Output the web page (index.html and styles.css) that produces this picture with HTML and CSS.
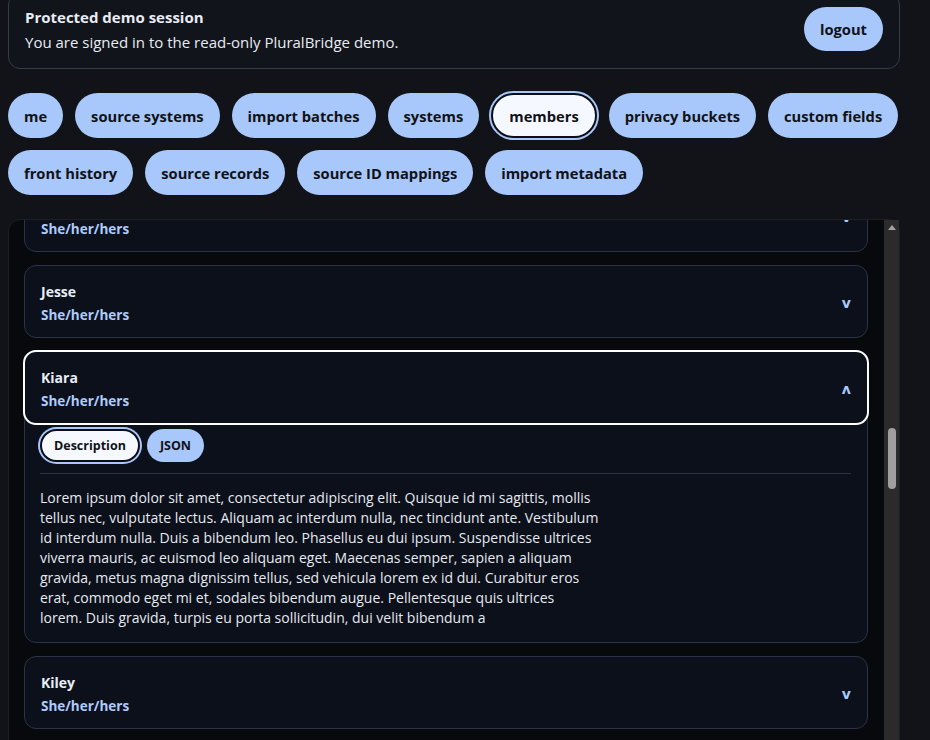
FILE: index.html
```html
<!DOCTYPE html>
<html lang="en">
<head>
  <meta charset="UTF-8">
  <title>PluralBridge demo</title>
  <link rel="stylesheet" href="styles.css">
</head>
<body>
  <header class="session">
    <div>
      <div class="session-title">Protected demo session</div>
      <div class="session-text">You are signed in to the read-only PluralBridge demo.</div>
    </div>
    <button class="pill">logout</button>
  </header>

  <nav class="tabs">
    <button class="pill">me</button>
    <button class="pill">source systems</button>
    <button class="pill">import batches</button>
    <button class="pill">systems</button>
    <button class="pill active">members</button>
    <button class="pill">privacy buckets</button>
    <button class="pill">custom fields</button>
    <button class="pill">front history</button>
    <button class="pill">source records</button>
    <button class="pill">source ID mappings</button>
    <button class="pill">import metadata</button>
  </nav>

  <section class="panel">
    <div class="list" id="members"></div>
    <div class="scrollbar">
      <div class="arrow up"></div>
      <div class="track"><div class="thumb" id="thumb"></div></div>
      <div class="arrow down"></div>
    </div>
  </section>

  <script src="app.js"></script>
</body>
</html>
```

FILE: styles.css
```css
html {
  overflow: hidden;
}

body {
  background: #111318;
  font-family: "Open Sans", "Noto Sans", sans-serif;
  color: #e8ecf4;
  margin: 0;
  padding: 0 30px 0 8px;
}

.session {
  margin-top: -7px;
  display: flex;
  justify-content: space-between;
  align-items: center;
  padding: 12px 16px 14px;
  border: 1px solid #363b46;
  border-radius: 12px;
  background: #11141a;
}

.session-title {
  font-size: 15px;
  font-weight: 700;
  line-height: 22px;
  margin-bottom: 2px;
}

.session-text {
  font-size: 15px;
  line-height: 24px;
}

.pill {
  font-family: inherit;
  font-size: 14.7px;
  font-weight: 700;
  color: #101217;
  background: #a8c7fa;
  border: none;
  border-radius: 999px;
  height: 45px;
  padding: 0 16px;
  cursor: pointer;
}

.pill.active {
  background: #f5f8ff;
  border: 2px solid #0b0d12;
  box-shadow: 0 0 0 2px #a8c7fa;
}

.session .pill {
  height: 44px;
  margin-bottom: 3px;
}

.tabs {
  display: flex;
  flex-wrap: wrap;
  gap: 12px;
  margin-top: 24px;
  margin-right: -8px;
}

.panel {
  display: flex;
  margin-top: 24px;
  height: 560px;
  background: #07090c;
  border: 1px solid #1c1f26;
  border-radius: 12px;
}

.list {
  position: relative;
  flex: 1;
  min-width: 0;
  overflow: hidden;
  padding: 16px 16px 0 15px;
  border-radius: 12px 0 0 12px;
}

.scrollbar {
  width: 15px;
  display: flex;
  flex-direction: column;
  background: #2b2b2b;
}

.arrow {
  height: 15px;
  display: flex;
  justify-content: center;
  align-items: center;
}

.arrow::before {
  content: "";
  border-left: 4.5px solid transparent;
  border-right: 4.5px solid transparent;
}

.arrow.up::before {
  border-bottom: 5px solid #a3a3a3;
}

.arrow.down::before {
  border-top: 5px solid #a3a3a3;
}

.track {
  flex: 1;
  display: flex;
  flex-direction: column;
  align-items: center;
}

.thumb {
  width: 8px;
  border-radius: 4px;
  background: #9f9f9f;
}

.card {
  border: 1px solid #2a3347;
  border-radius: 12px;
  background: #0b101b;
  margin-bottom: 13px;
}

.card-head {
  display: flex;
  justify-content: space-between;
  align-items: center;
  padding: 16px 16px 13px;
  border-radius: 11px;
}

.card.open .card-head {
  outline: 2px solid #ffffff;
  outline-offset: 0;
}

.name {
  font-size: 14px;
  font-weight: 700;
  line-height: 20px;
  margin-bottom: 4px;
  color: #e8edf6;
}

.pronouns {
  font-size: 13.5px;
  font-weight: 700;
  line-height: 18px;
  color: #aecbfb;
}

.chevron {
  font-family: "DejaVu Sans", sans-serif;
  font-size: 14px;
  font-weight: 700;
  color: #a8c7fa;
}

.card-body {
  padding: 0 16px 14px 15px;
}

.body-tabs {
  display: flex;
  gap: 7px;
  padding: 6px 0 11px;
  border-bottom: 1px solid #2a3347;
}

.body-tabs .pill {
  height: 33px;
  font-size: 12.5px;
  padding: 0 12px;
}

.body-tabs .pill:last-child {
  padding: 0 13px;
}

.description {
  margin: 14px 0 0;
  white-space: pre-line;
  font-size: 14px;
  line-height: 20px;
  color: #e6e9ef;
}
```

FILE: app.js
```js
const before = ["Alex", "Aria", "Blake", "Brooke", "Cameron", "Casey", "Dakota", "Dana", "Eden", "Ellis",
  "Finley", "Gray", "Harper", "Hayden", "Indigo", "Iris", "Jade", "Jamie", "Jay", "Jenna", "Jess"];
const after = ["Kiley", "Kit", "Lane", "Lark", "Lennon", "Logan", "Mara", "Micah", "Morgan", "Nico", "Noa",
  "Oakley", "Parker", "Quinn", "Rain", "Reese", "Riley", "Rowan", "Sage", "Sam", "Skye", "Sloane",
  "Tatum", "Theo", "Uma", "Val", "Wren", "Xen", "Yael", "Zara", "Zion"];
const pronouns = ["She/her/hers", "They/them/theirs", "He/him/his"];

const description = [
  "Lorem ipsum dolor sit amet, consectetur adipiscing elit. Quisque id mi sagittis, mollis",
  "tellus nec, vulputate lectus. Aliquam ac interdum nulla, nec tincidunt ante. Vestibulum",
  "id interdum nulla. Duis a bibendum leo. Phasellus eu dui ipsum. Suspendisse ultrices",
  "viverra mauris, ac euismod leo aliquam eget. Maecenas semper, sapien a aliquam",
  "gravida, metus magna dignissim tellus, sed vehicula lorem ex id dui. Curabitur eros",
  "erat, commodo eget mi et, sodales bibendum augue. Pellentesque quis ultrices",
  "lorem. Duis gravida, turpis eu porta sollicitudin, dui velit bibendum a"
].join("\n");

const members = [];
before.forEach((n, i) => members.push({ name: n, pronouns: i > 17 ? pronouns[0] : pronouns[i % 3] }));
members.push({ name: "Jesse", pronouns: pronouns[0] });
members.push({ name: "Kiara", pronouns: pronouns[0], open: true });
after.forEach((n, i) => members.push({ name: n, pronouns: i < 2 ? pronouns[0] : pronouns[i % 3] }));

const list = document.getElementById("members");

members.forEach(m => {
  const card = document.createElement("div");
  card.className = m.open ? "card open" : "card";
  card.innerHTML =
    '<div class="card-head"><div><div class="name">' + m.name + '</div>' +
    '<div class="pronouns">' + m.pronouns + '</div></div>' +
    '<span class="chevron">' + (m.open ? "ʌ" : "v") + '</span></div>';

  if (m.open) {
    card.innerHTML +=
      '<div class="card-body"><div class="body-tabs">' +
      '<button class="pill active">Description</button><button class="pill">JSON</button></div>' +
      '<p class="description">' + description + '</p></div>';
  }
  if (m.name === "Jesse") card.id = "jesse";
  list.appendChild(card);
});

list.scrollTop = document.getElementById("jesse").offsetTop - 45;

// fake scrollbar thumb, sized from the list's scroll state
const track = document.querySelector(".track");
const thumb = document.getElementById("thumb");
const ratio = track.clientHeight / list.scrollHeight;
thumb.style.marginTop = Math.round(list.scrollTop * ratio) + "px";
thumb.style.height = Math.round(list.clientHeight * ratio) + "px";
```
